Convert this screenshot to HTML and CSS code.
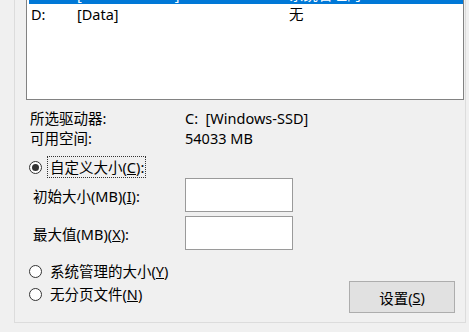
FILE: index.html
```html
<!DOCTYPE html>
<html lang="zh-CN">
<head>
<meta charset="utf-8">
<title>虚拟内存</title>
<link rel="stylesheet" href="styles.css">
</head>
<body>
<div class="page">
  <div class="group">
    <div class="listbox">
      <div class="row selected">
        <span class="c1">C:</span><span class="c2">[Windows-SSD]</span><span class="c3">系统管理的</span>
      </div>
      <div class="row">
        <span class="c1">D:</span><span class="c2">[Data]</span><span class="c3">无</span>
      </div>
    </div>

    <div class="info">
      <span>所选驱动器:</span><span>C:&nbsp; [Windows-SSD]</span>
      <span>可用空间:</span><span>54033 MB</span>
    </div>

    <div class="radio-row first">
      <span class="radio checked"></span>
      <span class="focus">自定义大小(<u>C</u>):</span>
    </div>

    <div class="fields">
      <div class="field">
        <span class="flabel">初始大小(MB)(<u>I</u>):</span>
        <span class="textbox"></span>
      </div>
      <div class="field">
        <span class="flabel">最大值(MB)(<u>X</u>):</span>
        <span class="textbox"></span>
      </div>
    </div>

    <div class="bottom">
      <div class="radios">
        <div class="radio-row">
          <span class="radio"></span>
          <span class="rlabel">系统管理的大小(<u>Y</u>)</span>
        </div>
        <div class="radio-row">
          <span class="radio"></span>
          <span class="rlabel">无分页文件(<u>N</u>)</span>
        </div>
      </div>
      <div class="button">设置(<u>S</u>)</div>
    </div>
  </div>
</div>
</body>
</html>
```

FILE: styles.css
```css
html, body {
  margin: 0;
  padding: 0;
  background: #f0f0f0;
}

body {
  font-family: "Noto Sans", "Noto Sans CJK SC", sans-serif;
  font-size: 14.5px;
  color: #000;
}

.page {
  width: 469px;
  height: 332px;
  overflow: hidden;
  padding-left: 14px;
  box-sizing: border-box;
}

.group {
  width: 452px;
  box-sizing: border-box;
  margin-top: -30px;
  border: 1px solid #dcdcdc;
  padding: 12px 0 9px 0;
}

.listbox {
  margin-left: 11px;
  width: 438px;
  height: 117px;
  box-sizing: border-box;
  border: 1px solid #828282;
  background: #fff;
  padding-left: 2px;
}

.row {
  display: flex;
  align-items: center;
  height: 20px;
  line-height: 20px;
  padding-left: 2px;
  white-space: nowrap;
}

.row.selected {
  background: #0078d7;
  color: #fff;
}

.c1 { width: 46px; }
.c2 { width: 212px; }

.info {
  display: grid;
  grid-template-columns: 155px auto;
  margin-top: 8px;
  padding-left: 15px;
  line-height: 20px;
}

.radio-row {
  display: flex;
  align-items: center;
  height: 22px;
  padding-left: 14px;
}

.radio-row.first {
  margin-top: 8px;
}

.radio {
  width: 13px;
  height: 13px;
  box-sizing: border-box;
  border: 1px solid #333;
  border-radius: 50%;
  background: #fff;
  display: flex;
  align-items: center;
  justify-content: center;
  flex: none;
}

.radio.checked::after {
  content: "";
  width: 7px;
  height: 7px;
  border-radius: 50%;
  background: #333;
}

.focus {
  margin-left: 5px;
  height: 22px;
  line-height: 20px;
  box-sizing: border-box;
  border: 1px dotted #333;
  padding: 0 1px 0 2px;
}

.rlabel {
  margin-left: 8px;
  line-height: 22px;
}

.fields {
  display: flex;
  flex-direction: column;
  gap: 4px;
  margin-top: 0;
}

.field {
  display: flex;
  align-items: center;
  padding-left: 18px;
}

.flabel {
  width: 152px;
}

.textbox {
  width: 108px;
  height: 34px;
  box-sizing: border-box;
  border: 1px solid #9a9a9a;
  background: #fff;
}

.bottom {
  display: flex;
  justify-content: space-between;
  align-items: flex-start;
  margin-top: 10px;
  padding-right: 10px;
}

.radios {
  display: flex;
  flex-direction: column;
  gap: 1px;
}

.button {
  margin-top: 21px;
  width: 106px;
  height: 32px;
  box-sizing: border-box;
  border: 1px solid #adadad;
  background: #e1e1e1;
  display: flex;
  align-items: center;
  justify-content: center;
}
```
